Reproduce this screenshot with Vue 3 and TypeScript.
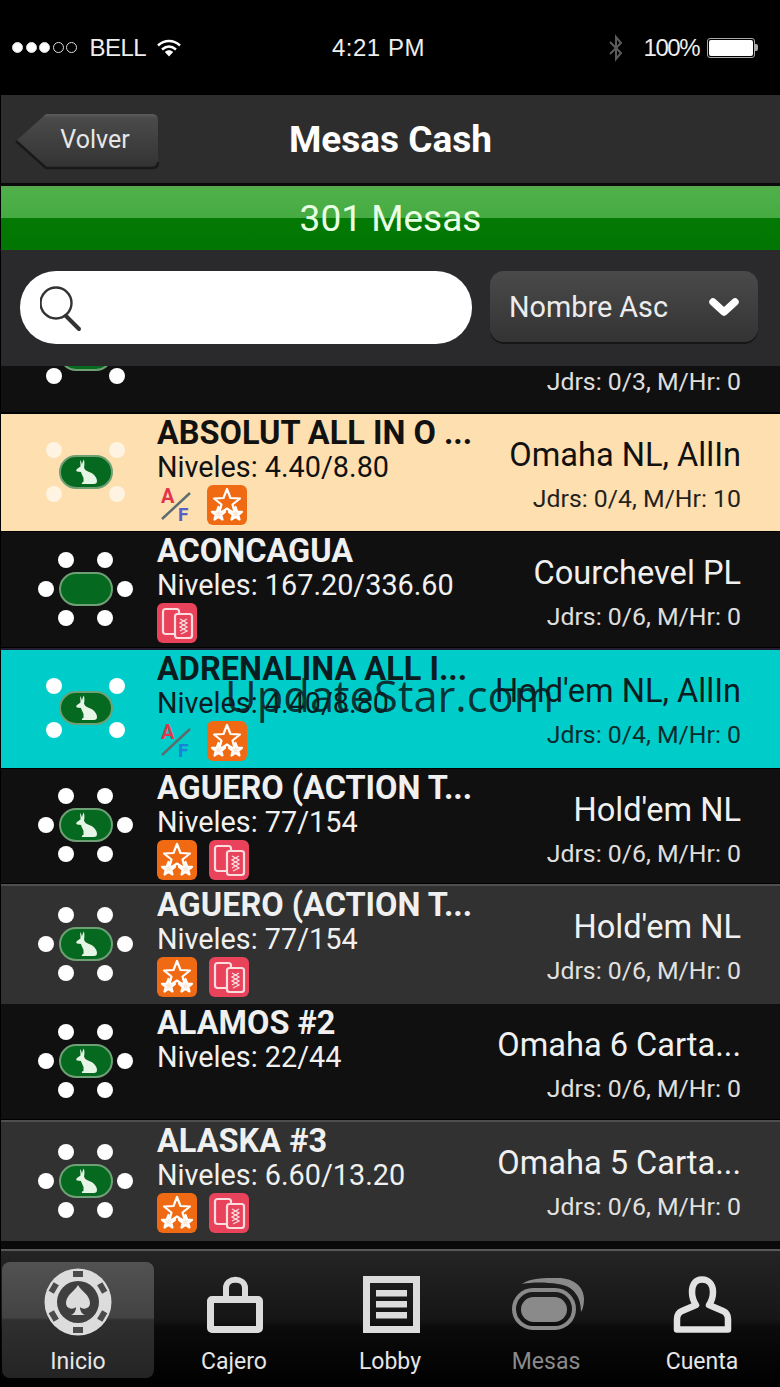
<template>
  <div class="screen">
    <!-- status bar -->
    <div class="status">
      <div class="status-left">
        <span class="dot on"></span><span class="dot on"></span><span class="dot on"></span>
        <span class="dot"></span><span class="dot"></span>
        <span class="carrier">BELL</span>
        <svg class="wifi" width="24" height="18" viewBox="0 0 24 18">
          <path d="M1 6.5C7.5 .5 16.5 .5 23 6.5M5 10.5C9.5 6.5 14.500 6.500 19 10.500" fill="none" stroke="#fff" stroke-width="2.400" />
          <path d="M7.800 13C10.500 10.700 13.500 10.700 16.200 13L12 17.500Z" fill="#fff" />
        </svg>
      </div>
      <span class="clock">4:21 PM</span>
      <div class="status-right">
        <svg width="18" height="28" viewBox="0 0 18 28">
          <path d="M3 8L14 19L9 25V3L14 9L3 20" fill="none" stroke="#5c5c5c" stroke-width="2" />
        </svg>
        <span class="pct">100%</span>
        <div class="battery"><div class="battery-fill"></div></div>
        <div class="battery-tip"></div>
      </div>
    </div>

    <!-- nav bar -->
    <div class="nav">
      <button class="back">
        <svg class="back-bg" width="144" height="58" viewBox="0 0 144 58">
          <defs>
            <linearGradient id="backGrad" x1="0" y1="0" x2="0" y2="1">
              <stop offset="0" stop-color="#5c5c5c" />
              <stop offset="0.08" stop-color="#4a4a4a" />
              <stop offset="1" stop-color="#333" />
            </linearGradient>
          </defs>
          <path d="M31 1H137Q143 1 143 7V49Q143 55 137 55H31L1 28Z" fill="url(#backGrad)" />
          <path d="M1 28L31 55H137Q143 55 143 49" fill="none" stroke="#191919" stroke-width="2.500" />
        </svg>
        <span>Volver</span>
      </button>
      <h1 class="title">Mesas Cash</h1>
    </div>

    <div class="count">301 Mesas</div>

    <!-- search + sort -->
    <div class="filters">
      <div class="search">
        <svg width="44" height="46" viewBox="0 0 44 46">
          <circle cx="16" cy="17" r="15.500" fill="none" stroke="#333" stroke-width="2.400" />
          <path d="M26 30L39 43" stroke="#333" stroke-width="4" stroke-linecap="round" />
        </svg>
      </div>
      <div class="sort">
        <span>Nombre Asc</span>
        <svg width="30" height="22" viewBox="0 0 30 22">
          <path d="M4 6L15 16L26 6" fill="none" stroke="#fff" stroke-width="7.500" stroke-linecap="round" stroke-linejoin="round" />
        </svg>
      </div>
    </div>

    <!-- table list -->
    <div class="list">
      <div class="list-inner">
        <div
          v-for="(t, i) in tables"
          :key="i"
          class="row"
          :class="t.tone"
          :style="{ height: t.h + 'px' }"
        >
          <svg class="table-icon" width="100" height="80" viewBox="0 0 100 80">
            <g class="seat">
              <template v-if="t.seats === 4">
                <circle cx="18" cy="18" r="8" /><circle cx="81" cy="18" r="8" />
                <circle cx="18" cy="62" r="8" /><circle cx="81" cy="62" r="8" />
              </template>
              <template v-else>
                <circle cx="30" cy="11" r="8" /><circle cx="69" cy="11" r="8" />
                <circle cx="10" cy="40" r="8" /><circle cx="89" cy="40" r="8" />
                <circle cx="30" cy="69" r="8" /><circle cx="69" cy="69" r="8" />
              </template>
            </g>
            <rect x="24" y="24" width="52" height="32" rx="16" fill="#056a20" stroke="#6f9f74" stroke-width="2" />
            <path
              v-if="t.rabbit"
              d="M44 28C45 29 45.800 31 46 33C46.200 31 46.800 29 47.800 27.500C48.600 30 48.600 33 48 35.500C48.500 37.500 50 38.500 52 39.500C57 41 61 45 61 49C61 51 60 52 58 52L46 52C45.500 51 46 50.200 47.500 50L47.500 46C46.500 43.500 45.500 42 45 40L41 39.500C40 39 40 38 41 37L44.500 34.500C44.500 32 44.200 30 44 28Z"
              fill="#e6f5e6"
            />
          </svg>

          <div v-if="t.name" class="info">
            <div class="name">{{ t.name }}</div>
            <div class="levels">Niveles: {{ t.levels }}</div>
            <div class="badges">
              <template v-for="b in t.badges" :key="b">
                <svg v-if="b === 'af'" class="badge af" width="36" height="40" viewBox="0 0 36 40">
                  <text x="4" y="18" class="af-a">A</text>
                  <path d="M5 34L33 8" stroke="#5c6d70" stroke-width="2.500" />
                  <text x="21" y="36" class="af-f">F</text>
                </svg>
                <svg v-else-if="b === 'star'" class="badge" width="40" height="40" viewBox="0 0 40 40">
                  <rect width="40" height="40" rx="6" fill="#ef6a12" />
                  <g fill="#ef6a12" stroke="#fff" stroke-width="2.200" stroke-linejoin="round">
                    <path d="M20 4L23.500 13L33 13.500L25.500 19.500L28 29L20 23.500L12 29L14.500 19.500L7 13.500L16.500 13Z" />
                    <path d="M11.500 22L13.200 26.500L18 26.800L14.300 29.800L15.500 34.500L11.500 31.800L7.500 34.500L8.700 29.800L5 26.800L9.800 26.500Z" fill="#fde8d8" />
                    <path d="M28.500 22L30.200 26.500L35 26.800L31.300 29.800L32.500 34.500L28.500 31.800L24.500 34.500L25.700 29.800L22 26.800L26.800 26.500Z" fill="#fde8d8" />
                  </g>
                </svg>
                <svg v-else class="badge" width="40" height="40" viewBox="0 0 40 40">
                  <rect width="40" height="40" rx="6" fill="#e8435a" />
                  <rect x="6" y="6" width="16" height="25" rx="2.500" fill="none" stroke="#fbdde0" stroke-width="2.200" />
                  <rect x="18" y="11" width="17" height="24" rx="2.500" fill="#e8435a" stroke="#fbdde0" stroke-width="2.200" />
                  <path d="M23 16L30 20L23 24L30 28L24 31M30 16L23 20L30 24L23 28" fill="none" stroke="#fbdde0" stroke-width="1.300" />
                </svg>
              </template>
            </div>
          </div>
          <div v-else class="info"></div>

          <div class="game">
            <div class="game-name">{{ t.game }}</div>
            <div class="players">{{ t.players }}</div>
          </div>
        </div>
      </div>
      <div class="watermark">UpdateStar.com</div>
    </div>

    <!-- tab bar -->
    <div class="tabs">
      <div class="tab active">
        <svg width="68" height="68" viewBox="0 0 68 68">
          <circle cx="34" cy="34" r="33.500" fill="#dcdcdc" />
          <g fill="#4a4a4a">
            <rect x="29" y="3" width="10" height="6" />
            <rect x="29" y="59" width="10" height="6" />
            <rect x="29" y="3" width="10" height="6" transform="rotate(60 34 34)" />
            <rect x="29" y="3" width="10" height="6" transform="rotate(120 34 34)" />
            <rect x="29" y="3" width="10" height="6" transform="rotate(240 34 34)" />
            <rect x="29" y="3" width="10" height="6" transform="rotate(300 34 34)" />
          </g>
          <circle cx="34" cy="34" r="21" fill="#3f3f3f" />
          <path d="M34 17C37 23 46 27 46 35C46 41 39 42 36 39C36 43 38 46 41 47H27C30 46 32 43 32 39C29 42 22 41 22 35C22 27 31 23 34 17Z" fill="#dcdcdc" />
        </svg>
        <span>Inicio</span>
      </div>
      <div class="tab">
        <svg width="60" height="60" viewBox="0 0 60 60">
          <path d="M22 22V13C22 2 41 2 41 13V22" fill="none" stroke="#dcdcdc" stroke-width="6" />
          <rect x="6.500" y="24.500" width="49" height="30" rx="1.500" fill="none" stroke="#dcdcdc" stroke-width="7" />
        </svg>
        <span>Cajero</span>
      </div>
      <div class="tab">
        <svg width="60" height="60" viewBox="0 0 60 60">
          <rect x="6.500" y="4.500" width="50" height="50" fill="none" stroke="#dcdcdc" stroke-width="7" />
          <rect x="16" y="15" width="31" height="6.500" fill="#dcdcdc" />
          <rect x="16" y="26" width="31" height="6.500" fill="#dcdcdc" />
          <rect x="16" y="37" width="31" height="6.500" fill="#dcdcdc" />
        </svg>
        <span>Lobby</span>
      </div>
      <div class="tab muted">
        <svg width="76" height="60" viewBox="0 0 76 60">
          <path d="M14 9C22 3 36 3 50 3C66 3 76 12 76 24C76 29 75 34 73 37C73 22 66 11 50 9C38 7 24 7 14 9Z" fill="#8a8a8a" />
          <rect x="6" y="15" width="60" height="38" rx="19" fill="none" stroke="#8a8a8a" stroke-width="4" />
          <rect x="13" y="22" width="46" height="25" rx="12.500" fill="#8a8a8a" />
        </svg>
        <span>Mesas</span>
      </div>
      <div class="tab">
        <svg width="60" height="60" viewBox="0 0 60 60">
          <path d="M30 4.500C23 4.500 20 10 20 17C20 23 22 27 24 30L10 36C6.500 37.500 5 41 5 44V54.500H56V44C56 41 54.500 37.500 51 36L37 30C39 27 41 23 41 17C41 10 37 4.500 30 4.500Z" fill="none" stroke="#e2e2e2" stroke-width="6.500" stroke-linejoin="round" />
        </svg>
        <span>Cuenta</span>
      </div>
    </div>
  </div>
</template>

<script setup lang="ts">
type Badge = 'af' | 'star' | 'cards'

interface TableRow {
  name: string
  levels: string
  game: string
  players: string
  seats: 4 | 6
  rabbit: boolean
  tone: 'dark' | 'grey' | 'cream' | 'cyan'
  h: number
  badges: Badge[]
}

const tables: TableRow[] = [
  { name: '', levels: '', game: '', players: 'Jdrs: 0/3, M/Hr: 0', seats: 4, rabbit: false, tone: 'dark', h: 116, badges: [] },
  { name: 'ABSOLUT ALL IN O ...', levels: '4.40/8.80', game: 'Omaha NL, AllIn', players: 'Jdrs: 0/4, M/Hr: 10', seats: 4, rabbit: true, tone: 'cream', h: 119, badges: ['af', 'star'] },
  { name: 'ACONCAGUA', levels: '167.20/336.60', game: 'Courchevel PL', players: 'Jdrs: 0/6, M/Hr: 0', seats: 6, rabbit: false, tone: 'dark', h: 116, badges: ['cards'] },
  { name: 'ADRENALINA ALL I...', levels: '4.40/8.80', game: "Hold'em NL, AllIn", players: 'Jdrs: 0/4, M/Hr: 0', seats: 4, rabbit: true, tone: 'cyan', h: 121, badges: ['af', 'star'] },
  { name: 'AGUERO (ACTION T...', levels: '77/154', game: "Hold'em NL", players: 'Jdrs: 0/6, M/Hr: 0', seats: 6, rabbit: true, tone: 'dark', h: 115, badges: ['star', 'cards'] },
  { name: 'AGUERO (ACTION T...', levels: '77/154', game: "Hold'em NL", players: 'Jdrs: 0/6, M/Hr: 0', seats: 6, rabbit: true, tone: 'grey', h: 120, badges: ['star', 'cards'] },
  { name: 'ALAMOS #2', levels: '22/44', game: 'Omaha 6 Carta...', players: 'Jdrs: 0/6, M/Hr: 0', seats: 6, rabbit: true, tone: 'dark', h: 116, badges: [] },
  { name: 'ALASKA #3', levels: '6.60/13.20', game: 'Omaha 5 Carta...', players: 'Jdrs: 0/6, M/Hr: 0', seats: 6, rabbit: true, tone: 'grey', h: 121, badges: ['star', 'cards'] },
]
</script>

<style>
body {
  background: #000;
}
</style>

<style scoped>
.screen {
  position: relative;
  width: 780px;
  height: 1387px;
  overflow: hidden;
  box-sizing: border-box;
  padding-left: 1px;
  background: #000;
  font-family: Roboto, "Liberation Sans", sans-serif;
  color: #f0f0f0;
}

/* status bar */
.status {
  position: relative;
  height: 95px;
  display: flex;
  align-items: center;
  justify-content: space-between;
  padding: 0 22px 0 11px;
  font-family: "Liberation Sans", Arial, sans-serif;
  font-size: 24px;
  color: #eee;
}
.status-left {
  display: flex;
  align-items: center;
  gap: 2.500px;
}
.dot {
  width: 9px;
  height: 9px;
  border: 1.500px solid #ddd;
  border-radius: 50%;
  box-sizing: content-box;
}
.dot.on {
  background: #fff;
}
.carrier {
  margin-left: 10px;
  letter-spacing: -0.500px;
}
.wifi {
  margin-left: 8px;
}
.clock {
  position: absolute;
  left: 331px;
  letter-spacing: 0.500px;
}
.status-right {
  display: flex;
  align-items: center;
}
.pct {
  margin: 0 8px 0 19px;
  letter-spacing: -1.500px;
}
.battery {
  width: 44px;
  height: 16px;
  padding: 1px;
  border: 1px solid #aaa;
  border-radius: 3px;
}
.battery-fill {
  height: 100%;
  background: #fff;
  border-radius: 2px;
}
.battery-tip {
  width: 3px;
  height: 7px;
  background: #aaa;
  border-radius: 0 2px 2px 0;
}

/* nav */
.nav {
  position: relative;
  height: 88px;
  background: #2d2d2d;
  display: flex;
  align-items: center;
  justify-content: center;
  border-bottom: 3px solid #0a0a0a;
}
.back {
  position: absolute;
  left: 14px;
  top: 18px;
  width: 144px;
  height: 58px;
  padding: 0 0 5px 16px;
  background: none;
  border: none;
  font: 25px Roboto, sans-serif;
  color: #e6e6e6;
}
.back-bg {
  position: absolute;
  left: 0;
  top: 0;
}
.back span {
  position: relative;
}
.title {
  margin: 0;
  font-size: 37px;
  font-weight: 700;
  color: #fff;
}
.count {
  height: 64px;
  line-height: 65px;
  text-align: center;
  font-size: 37px;
  color: #e8ffe4;
  background: linear-gradient(#5aa64f 0, #4fb04a 3px, #46ab42 50%, #037a03 50%, #027502 100%);
}

/* filters */
.filters {
  height: 116px;
  box-sizing: border-box;
  padding: 21px 22px 0 19px;
  background: #2a2a2d;
  display: flex;
  gap: 18px;
  align-items: flex-start;
}
.search {
  width: 452px;
  height: 73px;
  box-sizing: border-box;
  padding: 15px 0 0 20px;
  background: #fff;
  border-radius: 36px;
}
.sort {
  flex: 1;
  height: 71px;
  box-sizing: border-box;
  padding: 0 19px 0 19px;
  display: flex;
  align-items: center;
  justify-content: space-between;
  font-size: 28.800px;
  color: #ececec;
  background: linear-gradient(#4a4a4a, #333);
  border-radius: 14px;
  box-shadow: 0 2px 0 #161616;
}

/* list */
.list {
  position: relative;
  height: 883px;
  overflow: hidden;
  background: #0a0a0a;
}
.list-inner {
  margin-top: -69px;
}
.row {
  display: flex;
  align-items: center;
  box-sizing: border-box;
  padding-right: 39px;
}
.row.dark {
  background: #101011;
  border-bottom: 1px solid #000;
}
.row.grey {
  background: #313131;
  border-top: 2px solid #4e4e4e;
}
.row.cream {
  background: #fddfb0;
  color: #111;
  border-top: 1px solid #000;
  border-bottom: 1px solid #000;
}
.row.cyan {
  background: #00cdc9;
  color: #0a1c20;
  border-top: 2px solid #241c30;
  border-bottom: 1px solid #000;
}
.table-icon {
  flex: none;
  margin: -2px 21px 0 35px;
}
.seat {
  fill: #fff;
}
.cream .seat {
  fill: #fff3e2;
}
.info {
  flex: 1;
  align-self: flex-start;
  padding-top: 2px;
}
.name {
  height: 35px;
  line-height: 35px;
  font-size: 32.500px;
  font-weight: 700;
  white-space: nowrap;
}
.levels {
  height: 32px;
  line-height: 32px;
  font-size: 28.800px;
  white-space: nowrap;
}
.badges {
  display: flex;
  gap: 12px;
  margin-top: 2px;
}
.badge {
  display: block;
}
.af {
  margin-right: 2px;
}
.af-a {
  font: 700 20px Roboto, sans-serif;
  fill: #e2354b;
}
.af-f {
  font: 700 19px Roboto, sans-serif;
  fill: #5560c8;
}
.cyan .af-f {
  fill: #1a80d8;
}
.game {
  text-align: right;
  white-space: nowrap;
  align-self: flex-start;
  padding-top: 21px;
}
.game-name {
  height: 40px;
  line-height: 40px;
  font-size: 32.600px;
}
.players {
  margin-top: 4px;
  line-height: 40px;
  font-size: 24.800px;
  opacity: 0.92;
}
.watermark {
  position: absolute;
  left: 224px;
  top: 300px;
  font: 43.500px "Open Sans", sans-serif;
  color: rgba(10, 30, 35, 0.9);
  white-space: nowrap;
}

/* tabs */
.tabs {
  height: 138px;
  box-sizing: border-box;
  padding: 11px 0 9px 1px;
  border-top: 2px solid #585858;
  display: flex;
  background: linear-gradient(#242424, #161616 50%, #0b0b0b 56%, #000);
}
.tab {
  width: 156px;
  display: flex;
  flex-direction: column;
  align-items: center;
  justify-content: flex-start;
  font-size: 23px;
  color: #e6e6e6;
  border-radius: 8px;
}
.tab:not(.active) svg {
  margin-top: 13px;
}
.tab.active {
  width: 152px;
  margin-right: 2px;
  padding-top: 6px;
  background: linear-gradient(#525252, #434343 48%, #2f2f2f 50%, #242424);
}
.tab span {
  margin-top: 12px;
  line-height: 30px;
}
.tab.active span {
  margin-top: 11px;
}
.tab.muted {
  color: #8a8a8a;
}
</style>
